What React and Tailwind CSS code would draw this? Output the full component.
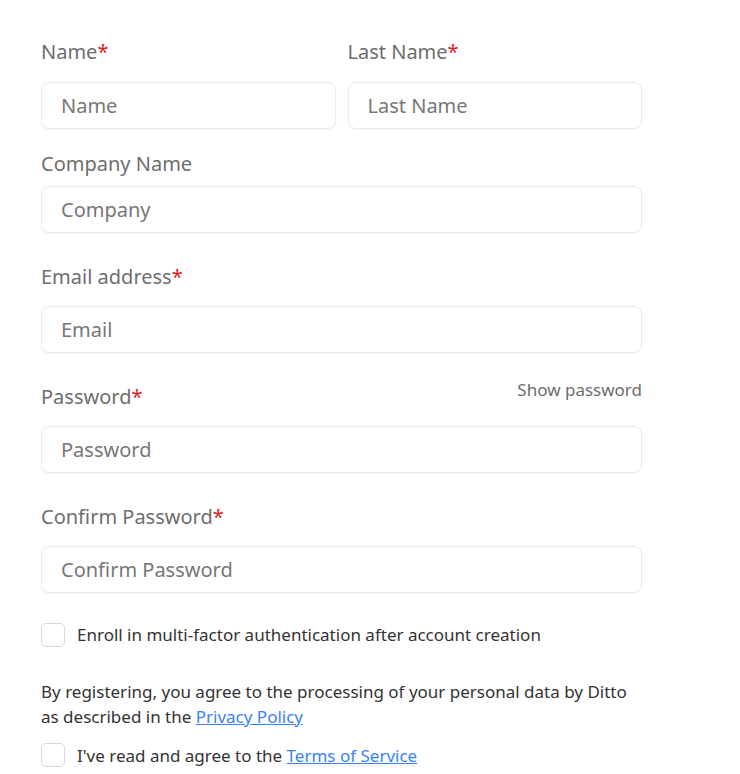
import { useState } from 'react'

const Label = ({ children, required, className = '' }) => (
  <label className={`block text-[20px] leading-[28px] text-[#6e6e6e] ${className}`}>
    {children}
    {required && <span className="text-[#e02020]">*</span>}
  </label>
)

const Field = ({ placeholder, type = 'text' }) => (
  <input
    type={type}
    placeholder={placeholder}
    className="block w-full h-[47px] rounded-lg border border-[#ebebeb] bg-white px-[19px] text-[20px] text-[#333] placeholder:text-[#777] shadow-[0_1px_2px_rgba(0,0,0,0.04)] outline-none"
  />
)

const Check = ({ children }) => (
  <label className="flex items-center gap-3 text-[17px] text-[#333]">
    <span className="w-6 h-6 shrink-0 rounded-[5px] border border-[#d9d9d9] bg-white" />
    <span>{children}</span>
  </label>
)

export default function App() {
  const [show, setShow] = useState(false)

  return (
    <div className="min-h-screen bg-white font-['Noto_Sans',sans-serif]">
      <form className="w-[601px] ml-[41px] pt-[38px]">
        {/* Name row */}
        <div className="grid grid-cols-2 gap-3">
          <div>
            <Label required className="mb-[16px]">Name</Label>
            <Field placeholder="Name" />
          </div>
          <div>
            <Label required className="mb-[16px]">Last Name</Label>
            <Field placeholder="Last Name" />
          </div>
        </div>

        <div className="mt-[21px]">
          <Label className="mb-[8px]">Company Name</Label>
          <Field placeholder="Company" />
        </div>

        <div className="mt-[30px]">
          <Label required className="mb-[15px]">Email address</Label>
          <Field placeholder="Email" type="email" />
        </div>

        <div className="mt-[30px]">
          <div className="flex items-start justify-between mb-[15px]">
            <Label required>Password</Label>
            <button type="button" onClick={() => setShow(!show)} className="text-[17px] text-[#6e6e6e] -mt-[6px]">
              Show password
            </button>
          </div>
          <Field placeholder="Password" type={show ? 'text' : 'password'} />
        </div>

        <div className="mt-[30px]">
          <Label required className="mb-[15px]">Confirm Password</Label>
          <Field placeholder="Confirm Password" type={show ? 'text' : 'password'} />
        </div>

        <div className="mt-[29px]">
          <Check>Enroll in multi-factor authentication after account creation</Check>
        </div>

        <p className="mt-[31px] text-[17px] leading-[25px] text-[#333] w-[600px]">
          By registering, you agree to the processing of your personal data by Ditto as described in the{' '}
          <a href="#" className="text-[#3b82f6] underline">Privacy Policy</a>
        </p>

        <div className="mt-[14px]">
          <Check>
            I've read and agree to the <a href="#" className="text-[#3b82f6] underline">Terms of Service</a>
          </Check>
        </div>
      </form>
    </div>
  )
}
